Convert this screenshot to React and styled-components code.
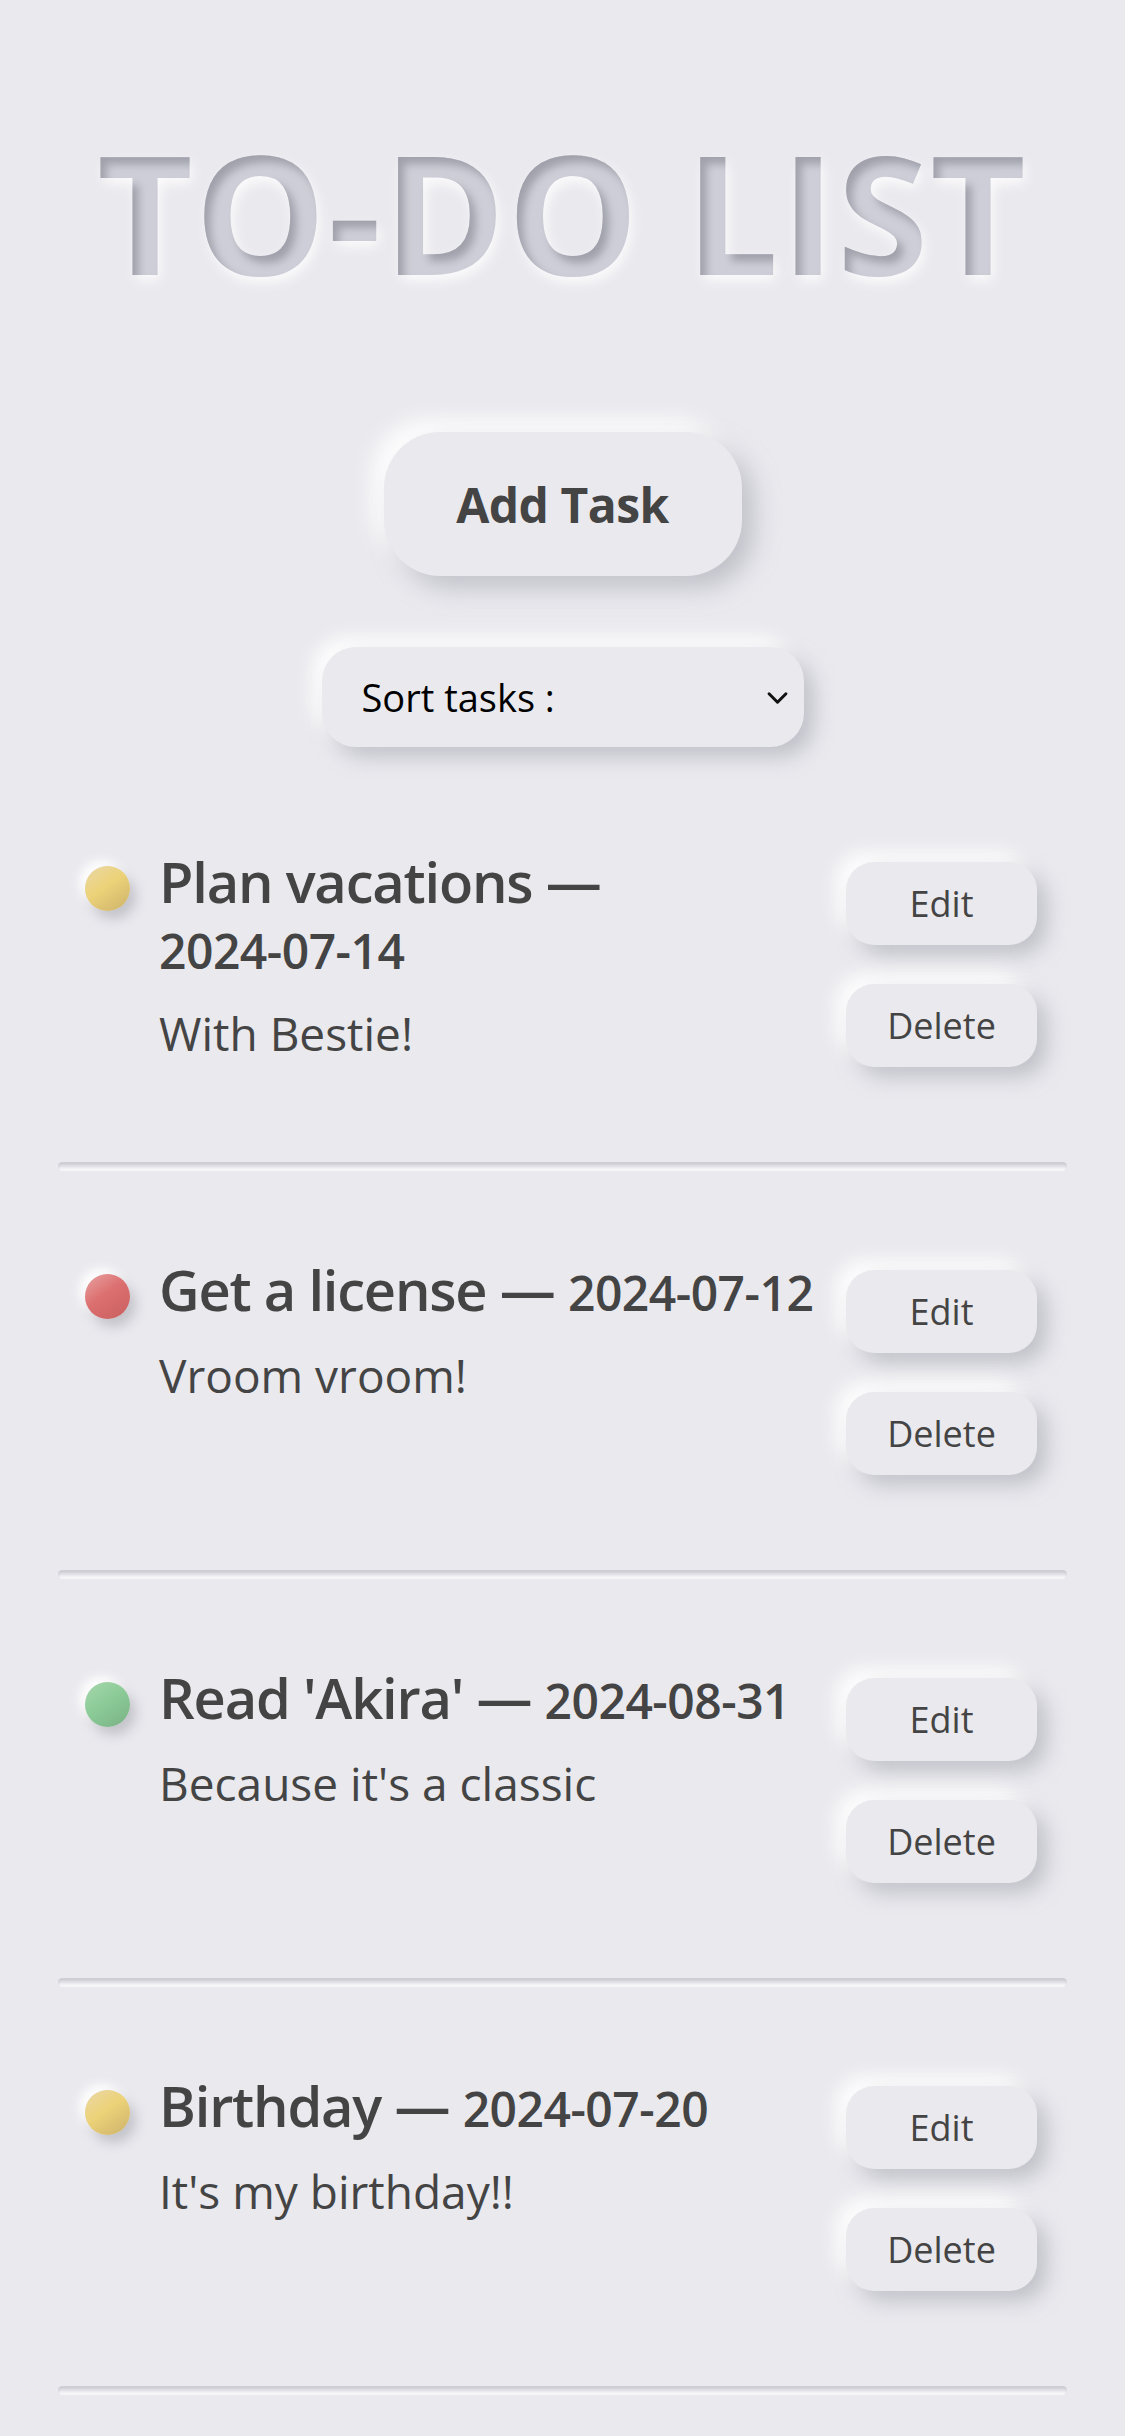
import React from "react";
import styled, { createGlobalStyle } from "styled-components";

const tasks = [
  { id: 1, title: "Plan vacations", date: "2024-07-14", text: "With Bestie!", priority: "medium" },
  { id: 2, title: "Get a license", date: "2024-07-12", text: "Vroom vroom!", priority: "high" },
  { id: 3, title: "Read 'Akira'", date: "2024-08-31", text: "Because it's a classic", priority: "low" },
  { id: 4, title: "Birthday", date: "2024-07-20", text: "It's my birthday!!", priority: "medium" },
];

const dotColors = {
  high: "linear-gradient(145deg, #e9a3a3 0%, #dc6f6f 45%, #c95f5f 100%)",
  medium: "linear-gradient(145deg, #ead8a8 0%, #ecd278 45%, #ccb26a 100%)",
  low: "linear-gradient(145deg, #a6d7ad 0%, #8ccb98 45%, #79b185 100%)",
};

export default function App() {
  return (
    <>
      <GlobalStyle />
      <FilterDefs aria-hidden="true">
        <filter id="insetText" x="-5%" y="-20%" width="110%" height="150%" colorInterpolationFilters="sRGB">
          <feOffset in="SourceAlpha" dx="6" dy="7" result="off" />
          <feGaussianBlur in="off" stdDeviation="4" result="offBlur" />
          <feComposite in="SourceAlpha" in2="offBlur" operator="out" result="edge" />
          <feFlood floodColor="#9a9ba6" floodOpacity="0.9" result="dark" />
          <feComposite in="dark" in2="edge" operator="in" result="innerShadow" />
          <feComposite in="innerShadow" in2="SourceGraphic" operator="over" result="letters" />
          <feGaussianBlur in="SourceAlpha" stdDeviation="7" result="glowBlur" />
          <feOffset in="glowBlur" dx="3" dy="6" result="glowOff" />
          <feFlood floodColor="#ffffff" floodOpacity="0.85" />
          <feComposite in2="glowOff" operator="in" result="glow" />
          <feMerge>
            <feMergeNode in="glow" />
            <feMergeNode in="letters" />
          </feMerge>
        </filter>
      </FilterDefs>
      <Page>
        <Title>TO-DO LIST</Title>
        <Controls>
          <AddButton>Add Task</AddButton>
          <SelectWrap>
            <Select defaultValue="">
              <option value="">Sort tasks :</option>
              <option value="date">By date</option>
              <option value="priority">By priority</option>
            </Select>
            <Chevron viewBox="0 0 24 16">
              <path d="M3 3 L12 12 L21 3" fill="none" stroke="#111" strokeWidth="3.2" strokeLinecap="round" strokeLinejoin="round" />
            </Chevron>
          </SelectWrap>
        </Controls>
        <List>
          {tasks.map((task) => (
            <li key={task.id}>
              <Row>
                <Dot $priority={task.priority} />
                <Body>
                  <TaskTitle>
                    {task.title} — <DateText>{task.date}</DateText>
                  </TaskTitle>
                  <Description>{task.text}</Description>
                </Body>
                <Actions>
                  <ActionButton>Edit</ActionButton>
                  <ActionButton>Delete</ActionButton>
                </Actions>
              </Row>
              <Divider />
            </li>
          ))}
        </List>
      </Page>
    </>
  );
}

const GlobalStyle = createGlobalStyle`
  html, body {
    margin: 0;
    padding: 0;
    background: #e9e9ee;
  }
  body {
    font-family: "Open Sans", "Noto Sans", sans-serif;
    color: #444;
  }
  * {
    box-sizing: border-box;
  }
`;

const FilterDefs = styled.svg`
  position: absolute;
  width: 0;
  height: 0;
  overflow: hidden;
`;

const Page = styled.div`
  min-height: 100vh;
  padding: 129px 58px 0;
  background: #e9e9ee;
`;

const Title = styled.h1`
  margin: 0;
  text-align: center;
  font-family: "Open Sans", sans-serif;
  font-size: 165px;
  font-weight: 700;
  line-height: 1;
  letter-spacing: 2px;
  color: #cdced7;
  filter: url(#insetText);
`;

const Controls = styled.div`
  display: flex;
  flex-direction: column;
  align-items: center;
  gap: 71px;
  margin-top: 138px;
`;

const AddButton = styled.button`
  width: 358px;
  height: 144px;
  border: none;
  border-radius: 56px;
  background: #e9e9ee;
  font-family: "Open Sans", sans-serif;
  font-size: 48px;
  font-weight: 700;
  letter-spacing: -0.5px;
  color: #444;
  box-shadow: 12px 12px 24px rgba(160, 160, 172, 0.55), -12px -12px 24px #ffffff;
  cursor: pointer;
`;

const SelectWrap = styled.div`
  position: relative;
  width: 482px;
  height: 100px;
`;

const Select = styled.select`
  appearance: none;
  width: 100%;
  height: 100%;
  border: none;
  border-radius: 34px;
  padding: 0 0 0 40px;
  background: #e9e9ee;
  font-family: "Open Sans", sans-serif;
  font-size: 38px;
  color: #000;
  box-shadow: 10px 10px 20px rgba(160, 160, 172, 0.55), -10px -10px 20px #ffffff;
  outline: none;
`;

const Chevron = styled.svg`
  position: absolute;
  right: 15px;
  top: 44px;
  width: 23px;
  height: 15px;
  pointer-events: none;
`;

const List = styled.ul`
  list-style: none;
  margin: 16px 0 0;
  padding: 0;
`;

const Row = styled.div`
  display: flex;
  align-items: flex-start;
  padding: 85px 30px 95px 27px;
`;

const Dot = styled.span`
  flex-shrink: 0;
  width: 45px;
  height: 45px;
  margin: 18px 29px 0 0;
  border-radius: 50%;
  background: ${(p) => dotColors[p.$priority]};
  box-shadow: 6px 8px 12px rgba(150, 150, 160, 0.45), -6px -6px 12px #ffffff;
`;

const Body = styled.div`
  flex: 1;
  min-width: 0;
`;

const TaskTitle = styled.h3`
  margin: 0;
  font-size: 56px;
  font-weight: 600;
  line-height: 66px;
  letter-spacing: -1.2px;
  color: #444;
`;

const DateText = styled.span`
  font-size: 48px;
  letter-spacing: -0.5px;
  white-space: nowrap;
`;

const Description = styled.p`
  margin: 18px 0 0;
  font-size: 46px;
  line-height: 62px;
  color: #444;
`;

const Actions = styled.div`
  flex-shrink: 0;
  display: flex;
  flex-direction: column;
  gap: 39px;
  margin: 14px 0 0 13px;
`;

const ActionButton = styled.button`
  width: 191px;
  height: 83px;
  border: none;
  border-radius: 28px;
  background: #e9e9ee;
  font-family: "Open Sans", sans-serif;
  font-size: 36px;
  color: #444;
  box-shadow: 10px 10px 20px rgba(160, 160, 172, 0.55), -10px -10px 20px #ffffff;
  cursor: pointer;
`;

const Divider = styled.div`
  height: 9px;
  border-radius: 5px;
  background: #e6e6eb;
  box-shadow: inset 0 3px 3px rgba(170, 170, 180, 0.45), inset 0 -3px 3px #f7f7f9;
`;
